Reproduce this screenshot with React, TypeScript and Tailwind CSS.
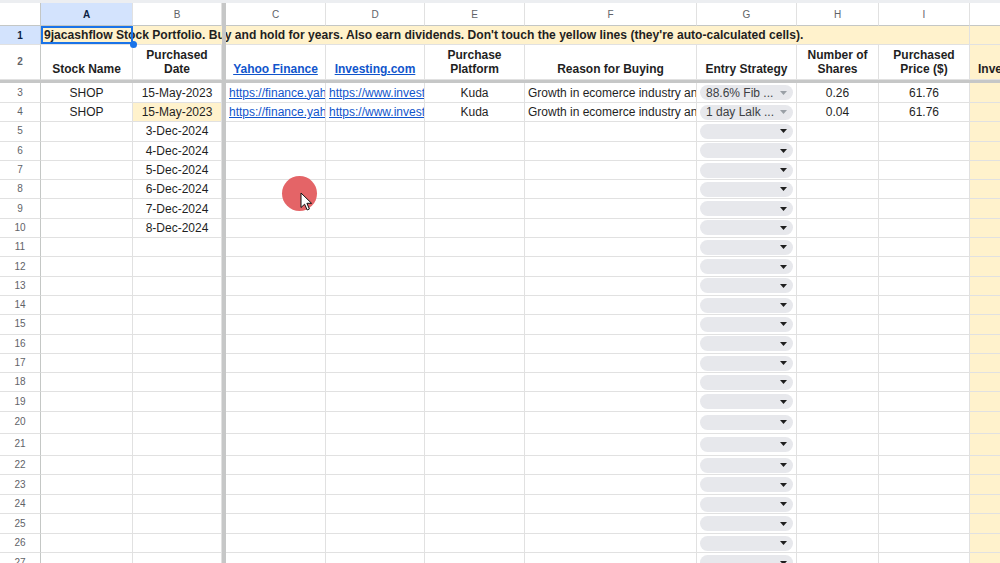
import React from 'react'

// column template: row header, A, B, freeze, C, D, E, F, G, H, I, J
const GRID = 'grid grid-cols-[41px_92px_89px_4px_100px_99px_100px_172px_100px_82px_91px_100px]'

const LINE = 'border-r border-b border-[#e1e1e1]'

type DataRow = {
  name?: string
  date?: string
  yahoo?: string
  investing?: string
  platform?: string
  reason?: string
  strategy?: string
  shares?: string
  price?: string
  invested?: string
}

const data: Record<number, DataRow> = {
  3: {
    name: 'SHOP',
    date: '15-May-2023',
    yahoo: 'https://finance.yahoo.com/quote/SHOP/',
    investing: 'https://www.investing.com/equities/shopify-inc',
    platform: 'Kuda',
    reason: 'Growth in ecomerce industry and strong fundamentals',
    strategy: '88.6% Fib ...',
    shares: '0.26',
    price: '61.76',
    invested: '$16.06',
  },
  4: {
    name: 'SHOP',
    date: '15-May-2023',
    yahoo: 'https://finance.yahoo.com/quote/SHOP/',
    investing: 'https://www.investing.com/equities/shopify-inc',
    platform: 'Kuda',
    reason: 'Growth in ecomerce industry and strong fundamentals',
    strategy: '1 day Lalk ...',
    shares: '0.04',
    price: '61.76',
    invested: '$2.47',
  },
  5: { date: '3-Dec-2024' },
  6: { date: '4-Dec-2024' },
  7: { date: '5-Dec-2024' },
  8: { date: '6-Dec-2024' },
  9: { date: '7-Dec-2024' },
  10: { date: '8-Dec-2024' },
}

const rowNumbers = Array.from({ length: 25 }, (_, i) => i + 3)

// rows 20 and 21 are taller in the sheet, the rest below are a touch taller than the top block
const rowHeight = (n: number) => {
  if (n === 20 || n === 21) return 'h-[22px]'
  if (n === 3) return 'h-[20px]'
  if (n > 21) return 'h-[19.5px]'
  return 'h-[19.3px]'
}

const Freeze = () => <div className="bg-[#c6c7c7] relative z-10" />

const RowHead: React.FC<{ n: number; active?: boolean }> = ({ n, active }) => (
  <div
    className={`flex items-center justify-center text-[10px] border-r border-r-[#c4c7c5] border-b border-b-[#e1e1e1] ${
      active ? 'bg-[#d3e3fd] text-[#0b1f44] font-bold' : 'bg-white text-[#5f6368]'
    }`}
  >
    {n}
  </div>
)

const Chip: React.FC<{ label?: string }> = ({ label }) => (
  <div className="ml-[3px] h-[15px] w-[93px] rounded-full bg-[#e7e8ec] flex items-center justify-between pl-[6px] pr-[6px]">
    <span className="text-[12px] text-[#3c4043] whitespace-nowrap overflow-hidden">{label ?? ''}</span>
    <svg width="7" height="4" viewBox="0 0 7 4" className="shrink-0">
      <path d="M0 0H7L3.5 4Z" fill={label ? '#9aa0a6' : '#1f1f1f'} />
    </svg>
  </div>
)

function Cursor() {
  return (
    <>
      <div className="absolute left-[282px] top-[176px] w-[35px] h-[35px] rounded-full bg-[#e46467]" />
      <svg
        className="absolute left-[300px] top-[192px]"
        width="13"
        height="19"
        viewBox="0 0 13 19"
      >
        <path
          d="M1 1V15.5L4.6 12.2L7.2 18L9.4 17L6.9 11.3H11.6Z"
          fill="#fff"
          stroke="#111"
          strokeWidth="1"
          strokeLinejoin="round"
        />
      </svg>
    </>
  )
}

export default function App() {
  const letters = ['A', 'B', '', 'C', 'D', 'E', 'F', 'G', 'H', 'I', 'J']

  return (
    <div className="relative w-[1000px] h-[563px] overflow-hidden bg-white font-['Liberation_Sans',Arial,sans-serif] text-[#1f1f1f]">
      <div className="h-[3px] bg-[#eceef1]" />

      {/* column letters */}
      <div className={`${GRID} h-[23px]`}>
        <div className="bg-white border-r border-r-[#c4c7c5] border-b border-b-[#c4c7c5]" />
        {letters.map((l, i) =>
          i === 2 ? (
            <Freeze key="fz" />
          ) : (
            <div
              key={l}
              className={`flex items-center justify-center text-[10px] border-r border-r-[#e1e1e1] border-b border-b-[#c4c7c5] ${
                l === 'A' ? 'bg-[#d3e3fd] text-[#0b1f44] font-bold' : 'bg-white text-[#5f6368]'
              }`}
            >
              {l}
            </div>
          )
        )}
      </div>

      {/* row 1: title, overflows across the row */}
      <div className={`${GRID} h-[19px] bg-[#fff2cc]`}>
        <RowHead n={1} active />
        <div className="relative flex items-center pl-[3px] whitespace-nowrap text-[12.1px] font-bold border-b border-[#e1e1e1]">
          9jacashflow Stock Portfolio. Buy and hold for years. Also earn dividends. Don't touch the yellow lines (they're auto-calculated cells).
          <div className="absolute inset-0 border-2 border-[#1a73e8]" />
          <div className="absolute right-[-4px] bottom-[-4px] w-[7px] h-[7px] rounded-full bg-[#1a73e8] z-20" />
        </div>
        <div className="border-b border-[#e1e1e1]" />
        <Freeze />
        <div className="border-b border-[#e1e1e1]" />
        <div className="border-b border-[#e1e1e1]" />
        <div className="border-b border-[#e1e1e1]" />
        <div className="border-b border-[#e1e1e1]" />
        <div className="border-b border-[#e1e1e1]" />
        <div className="border-b border-[#e1e1e1]" />
        <div className="border-r border-b border-[#e1e1e1]" />
        <div className="border-b border-[#e1e1e1]" />
      </div>

      {/* row 2: headers */}
      <div className={`${GRID} h-[35px] text-[12px] font-bold leading-[14px]`}>
        <RowHead n={2} />
        <div className={`${LINE} flex flex-col items-center justify-end text-center pb-[3px]`}>Stock Name</div>
        <div className={`${LINE} flex flex-col items-center justify-end text-center pb-[3px]`}>
          <span>Purchased</span>
          <span>Date</span>
        </div>
        <Freeze />
        <div className={`${LINE} flex flex-col items-center justify-end text-center pb-[3px]`}>
          <span className="text-[#1155cc] underline">Yahoo Finance</span>
        </div>
        <div className={`${LINE} flex flex-col items-center justify-end text-center pb-[3px]`}>
          <span className="text-[#1155cc] underline">Investing.com</span>
        </div>
        <div className={`${LINE} flex flex-col items-center justify-end text-center pb-[3px]`}>
          <span>Purchase</span>
          <span>Platform</span>
        </div>
        <div className={`${LINE} flex flex-col items-center justify-end text-center pb-[3px]`}>Reason for Buying</div>
        <div className={`${LINE} flex flex-col items-center justify-end text-center pb-[3px]`}>Entry Strategy</div>
        <div className={`${LINE} flex flex-col items-center justify-end text-center pb-[3px]`}>
          <span>Number of</span>
          <span>Shares</span>
        </div>
        <div className={`${LINE} flex flex-col items-center justify-end text-center pb-[3px]`}>
          <span>Purchased</span>
          <span>Price ($)</span>
        </div>
        <div className={`${LINE} bg-[#fff2cc] flex flex-col items-start justify-end pl-[8px] pb-[3px] whitespace-nowrap`}>
          Invested Amount ($)
        </div>
      </div>

      {/* frozen row divider */}
      <div className="h-[3px] bg-[#c6c7c7]" />

      {rowNumbers.map((n) => {
        const r = data[n] ?? {}
        return (
          <div key={n} className={`${GRID} ${rowHeight(n)} text-[12px] leading-[14px]`}>
            <RowHead n={n} />
            <div className={`${LINE} flex items-center justify-center whitespace-nowrap overflow-hidden`}>{r.name}</div>
            <div
              className={`${LINE} flex items-center justify-center whitespace-nowrap overflow-hidden ${
                n === 4 ? 'bg-[#fff2cc]' : ''
              }`}
            >
              {r.date}
            </div>
            <Freeze />
            <div className={`${LINE} flex items-center pl-[3px] whitespace-nowrap overflow-hidden`}>
              {r.yahoo && <span className="text-[#1155cc] underline">{r.yahoo}</span>}
            </div>
            <div className={`${LINE} flex items-center pl-[3px] whitespace-nowrap overflow-hidden`}>
              {r.investing && <span className="text-[#1155cc] underline">{r.investing}</span>}
            </div>
            <div className={`${LINE} flex items-center justify-center whitespace-nowrap overflow-hidden`}>{r.platform}</div>
            <div className={`${LINE} flex items-center pl-[3px] whitespace-nowrap overflow-hidden`}>{r.reason}</div>
            <div className={`${LINE} flex items-center overflow-hidden`}>
              <Chip label={r.strategy} />
            </div>
            <div className={`${LINE} flex items-center justify-center whitespace-nowrap overflow-hidden`}>{r.shares}</div>
            <div className={`${LINE} flex items-center justify-center whitespace-nowrap overflow-hidden`}>{r.price}</div>
            <div className={`${LINE} bg-[#fff2cc] flex items-center justify-center whitespace-nowrap overflow-hidden`}>
              {r.invested}
            </div>
          </div>
        )
      })}

      <Cursor />
    </div>
  )
}
